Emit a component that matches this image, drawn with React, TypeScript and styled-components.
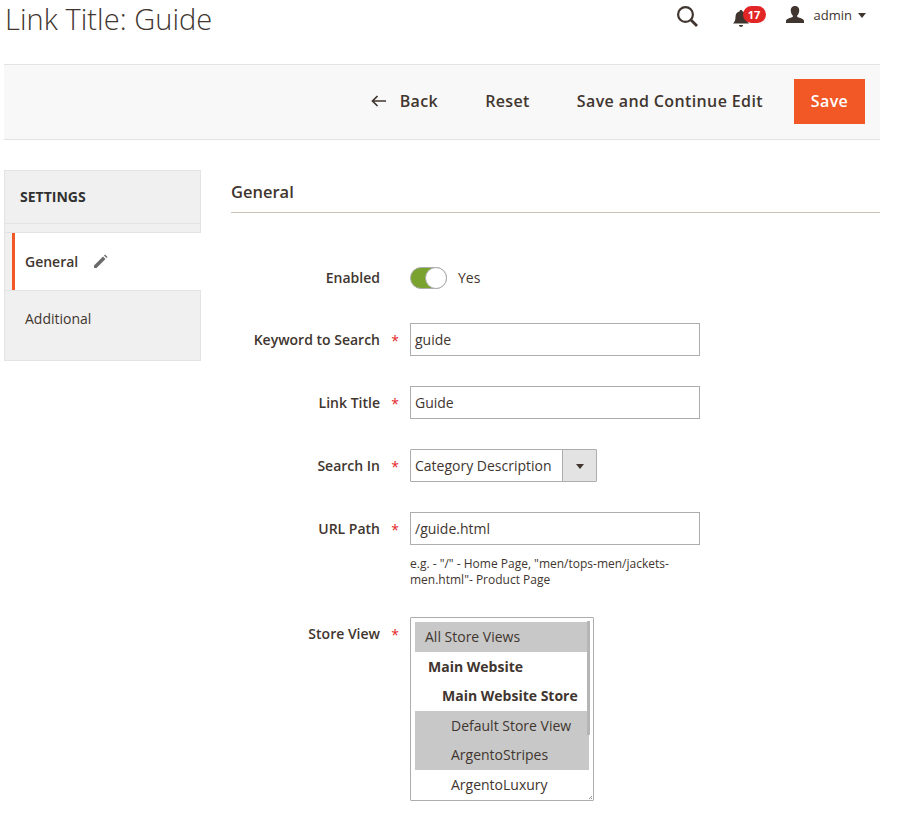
import React from "react";
import styled, { createGlobalStyle } from "styled-components";

const Global = createGlobalStyle`
  html, body { margin: 0; padding: 0; background: #fff; }
  body { font-family: "Open Sans", "Liberation Sans", sans-serif; color: #41362f; font-size: 14px; }
  * { box-sizing: border-box; }
`;
const Page = styled.div`width: 906px; height: 819px; overflow: hidden; padding: 0 26px 0 4px;`;
const Header = styled.header`height: 64px; display: flex; align-items: flex-start; justify-content: space-between;`;
const Title = styled.h1`margin: 0; padding: 1px 0 0 1px; font-size: 29px; line-height: 36px; font-weight: 300; letter-spacing: .06px; color: #41362f;`;
const HeaderTools = styled.div`display: flex; align-items: center; height: 30px; margin-right: 14px;`;
const SearchIcon = styled.svg`width: 24px; height: 24px; margin-right: 33px; display: block; margin-top: 1px;`;
const BellWrap = styled.div`position: relative; width: 20px; height: 24px; margin-right: 33px; color: #41362f;`;
const Badge = styled.span`position: absolute; left: 11px; top: 3px; min-width: 23px; height: 17px; border-radius: 9px; background: #e22626; color: #fff; font-size: 11px; font-weight: 700; line-height: 17px; text-align: center;`;
const UserName = styled.span`font-size: 13px; margin: 0 6px 0 9px; line-height: 20px; color: #41362f;`;
const Caret = styled.span`width: 0; height: 0; border-left: 4.5px solid transparent; border-right: 4.5px solid transparent; border-top: 5px solid #41362f;`;
const ActionBar = styled.div`height: 76px; background: #f8f8f8; border-top: 1px solid #e3e3e3; border-bottom: 1px solid #e3e3e3; display: flex; align-items: center; justify-content: flex-end; padding: 0 15px 2px 0;`;
const ActionButton = styled.button`display: flex; align-items: center; gap: 14px; border: 0; background: none; padding: 0; margin-right: 47px; font: 600 16px/22px "Open Sans", sans-serif; letter-spacing: .38px; color: #41362f;`;
const SaveButton = styled.button`width: 71px; height: 45px; border: 0; background: #f15826; color: #fff; font: 600 16px/22px "Open Sans", sans-serif; letter-spacing: .38px; margin-left: -16px; padding: 0;`;
const Columns = styled.div`display: grid; grid-template-columns: 197px 1fr; column-gap: 30px; padding-top: 30px;`;
const Sidebar = styled.aside`height: 191px; background: #f0f0f0; border: 1px solid #e3e3e3; display: flex; flex-direction: column;`;
const SideHeading = styled.div`height: 53px; padding: 0 15px; font-size: 14px; font-weight: 700; line-height: 52px; color: #303030; border-bottom: 1px solid #e3e3e3;`;
const SideSpacer = styled.div`height: 9px; border-bottom: 1px solid #e3e3e3;`;
const SideActive = styled.div`height: 57px; margin: 0 -1px 0 7px; background: #fff; border-left: 3px solid #f15826; padding-left: 10px; display: flex; align-items: center; gap: 15px; font-size: 14px; font-weight: 600; color: #41362f;`;
const SideItem = styled.div`height: 57px; padding: 0 20px; border-top: 1px solid #e3e3e3; line-height: 56px; font-size: 14px; color: #41362f;`;
const Main = styled.main`display: block;`;
const SectionTitle = styled.h2`margin: 0; height: 43px; padding-top: 10px; font-size: 16.5px; line-height: 24px; font-weight: 600; color: #41362f; border-bottom: 1px solid #cac3b4;`;
const Form = styled.div`padding-top: 48px; display: flex; flex-direction: column;`;
const Row = styled.div<{ $mb: number }>`display: grid; grid-template-columns: 149px 30px 1fr; margin-bottom: ${p => p.$mb}px;`;
const Label = styled.label`font-size: 14px; font-weight: 600; line-height: 33px; text-align: right; color: #41362f;`;
const Star = styled.span`color: #e22626; font-size: 14px; height: 33px; line-height: 36px; text-align: center;`;
const ToggleRow = styled.div`display: flex; align-items: center; gap: 11px; height: 33px; font-size: 14px;`;
const Toggle = styled.span`position: relative; display: block; width: 37px; height: 22px; border-radius: 11px; background: #79a22e; border: 1px solid #adadad;`;
const Knob = styled.span`position: absolute; right: -1px; top: -1px; width: 22px; height: 22px; border-radius: 50%; background: #fff; border: 1px solid #adadad;`;
const TextInput = styled.input`display: block; width: 290px; height: 33px; border: 1px solid #adadad; padding: 0 4px; font: 14px/31px "Open Sans", sans-serif; color: #41362f; background: #fff; outline: none;`;
const SelectBox = styled.div`display: flex; width: 187px; height: 33px; border: 1px solid #adadad; border-radius: 1px; font-size: 14px; line-height: 31px;`;
const SelectValue = styled.span`flex: 1; padding-left: 4px; white-space: nowrap;`;
const SelectArrow = styled.span`width: 34px; background: #e3e3e3; border-left: 1px solid #adadad; display: flex; align-items: center; justify-content: center;`;
const SmallCaret = styled.span`width: 0; height: 0; margin-top: 1px; border-left: 4px solid transparent; border-right: 4px solid transparent; border-top: 5px solid #41362f;`;
const Note = styled.p`margin: 11px 0 0; width: 290px; font-size: 12px; line-height: 15.5px; color: #41362f;`;
const ListBox = styled.div`position: relative; width: 184px; height: 184px; border: 1px solid #adadad; border-radius: 1px; padding: 4px; overflow: hidden;`;
const Option = styled.div<{ $selected?: boolean; $bold?: boolean; $indent: number }>`
  width: 174px; height: 29.6px; line-height: 29px; font-size: 14px; white-space: nowrap;
  padding-left: ${p => p.$indent}px;
  font-weight: ${p => (p.$bold ? 700 : 400)};
  background: ${p => (p.$selected ? "#c8c8c8" : "transparent")};
  color: #41362f;
`;
const ScrollThumb = styled.span`position: absolute; left: 176px; top: 3px; width: 3px; height: 114px; background: #b5b5b5;`;
const Grip = styled.svg`position: absolute; right: 1px; bottom: 1px; width: 3px; height: 3px;`;

const options = [
  { t: "All Store Views", s: true, i: 10 },
  { t: "Main Website", b: true, i: 13 },
  { t: "Main Website Store", b: true, i: 27 },
  { t: "Default Store View", s: true, i: 36 },
  { t: "ArgentoStripes", s: true, i: 36 },
  { t: "ArgentoLuxury", i: 36 },
];

export default function App() {
  return (
    <Page>
      <Global />
      <Header>
        <Title>Link Title: Guide</Title>
        <HeaderTools>
          <SearchIcon viewBox="0 0 24 24" fill="none" stroke="#41362f" strokeWidth="2.2">
            <circle cx="10.5" cy="10.5" r="7.4" />
            <path d="M16 16l6 6" strokeWidth="2.8" />
          </SearchIcon>
          <BellWrap>
            <svg width="18" height="20" viewBox="0 0 18 20" style={{ marginTop: 6 }} fill="#41362f">
              <path d="M9 1c1 0 1.5.6 1.6 1.5C13.500 3.300 14.500 5.500 14.500 8c0 3 .8 4.700 2.500 6.500H1C2.700 12.700 3.500 11 3.500 8c0-2.500 1-4.700 3.900-5.500C7.500 1.600 8 1 9 1z" />
              <path d="M7 16h4c0 1.200-.9 2-2 2s-2-.8-2-2z" />
            </svg>
            <Badge>17</Badge>
          </BellWrap>
          <svg width="20" height="20" viewBox="0 0 20 20" fill="#41362f">
            <path d="M10 1c3 0 4.500 2.200 4.200 5-.2 2-1 3.600-2 4.500v1.500c2.500.8 6.800 1.700 6.800 4V18H1v-2c0-2.300 4.300-3.200 6.800-4v-1.500c-1-.9-1.800-2.500-2-4.500C5.500 3.200 7 1 10 1z" />
          </svg>
          <UserName>admin</UserName>
          <Caret />
        </HeaderTools>
      </Header>
      <ActionBar>
        <ActionButton>
          <svg width="15" height="12" viewBox="0 0 15 12" fill="none" stroke="#41362f" strokeWidth="1.7">
            <path d="M15 6H2M6.500 1L1.500 6l5 5" />
          </svg>
          Back
        </ActionButton>
        <ActionButton>Reset</ActionButton>
        <ActionButton>Save and Continue Edit</ActionButton>
        <SaveButton>Save</SaveButton>
      </ActionBar>
      <Columns>
        <Sidebar>
          <SideHeading>SETTINGS</SideHeading>
          <SideSpacer />
          <SideActive>
            General
            <svg width="15" height="15" viewBox="0 0 15 15" fill="#6b6b6b">
              <path d="M1 11.500L10 2.500l2.500 2.500L3.500 14H1zM11 1.500l1-1 2.500 2.500-1 1z" />
            </svg>
          </SideActive>
          <SideItem>Additional</SideItem>
        </Sidebar>
        <Main>
          <SectionTitle>General</SectionTitle>
          <Form>
            <Row $mb={29}>
              <Label>Enabled</Label>
              <span />
              <ToggleRow><Toggle><Knob /></Toggle>Yes</ToggleRow>
            </Row>
            <Row $mb={30}>
              <Label>Keyword to Search</Label>
              <Star>*</Star>
              <TextInput readOnly value="guide" />
            </Row>
            <Row $mb={30}>
              <Label>Link Title</Label>
              <Star>*</Star>
              <TextInput readOnly value="Guide" />
            </Row>
            <Row $mb={30}>
              <Label>Search In</Label>
              <Star>*</Star>
              <SelectBox>
                <SelectValue>Category Description</SelectValue>
                <SelectArrow><SmallCaret /></SelectArrow>
              </SelectBox>
            </Row>
            <Row $mb={30}>
              <Label>URL Path</Label>
              <Star>*</Star>
              <div>
                <TextInput readOnly value="/guide.html" />
                <Note>e.g. - "/" - Home Page, "men/tops-men/jackets-men.html"- Product Page</Note>
              </div>
            </Row>
            <Row $mb={0}>
              <Label>Store View</Label>
              <Star>*</Star>
              <ListBox>
                {options.map(o => (
                  <Option key={o.t} $selected={o.s} $bold={o.b} $indent={o.i}>{o.t}</Option>
                ))}
                <ScrollThumb />
                <Grip viewBox="0 0 3 3" stroke="#777" strokeWidth=".8"><path d="M0 3L3 0M2 3l1-1" /></Grip>
              </ListBox>
            </Row>
          </Form>
        </Main>
      </Columns>
    </Page>
  );
}
